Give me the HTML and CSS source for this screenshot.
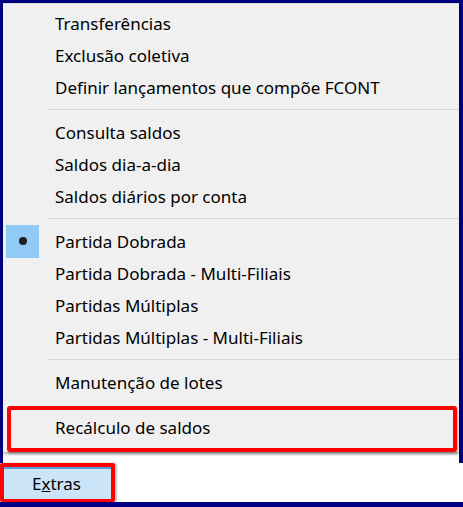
FILE: index.html
```html
<!DOCTYPE html>
<html lang="en">
<head>
    <meta charset="UTF-8">
    <meta name="viewport" content="width=device-width, initial-scale=1.0">
    <title>Menu Extras</title>
    <link rel="stylesheet" href="styles.css">
</head>
<body>
    <div class="screen">
        <div class="edge-top"></div>
        <div class="main">
            <div class="edge-left"></div>
            <div class="menu-area">
                <div class="menu">
                    <div class="item"><span class="gutter"></span><span class="label">Transferências</span></div>
                    <div class="item"><span class="gutter"></span><span class="label">Exclusão coletiva</span></div>
                    <div class="item"><span class="gutter"></span><span class="label">Definir lançamentos que compõe FCONT</span></div>
                    <div class="sep"></div>
                    <div class="item"><span class="gutter"></span><span class="label">Consulta saldos</span></div>
                    <div class="item"><span class="gutter"></span><span class="label">Saldos dia-a-dia</span></div>
                    <div class="item"><span class="gutter"></span><span class="label">Saldos diários por conta</span></div>
                    <div class="sep"></div>
                    <div class="item"><span class="gutter"><span class="check"><span class="dot"></span></span></span><span class="label">Partida Dobrada</span></div>
                    <div class="item"><span class="gutter"></span><span class="label">Partida Dobrada - Multi-Filiais</span></div>
                    <div class="item"><span class="gutter"></span><span class="label">Partidas Múltiplas</span></div>
                    <div class="item"><span class="gutter"></span><span class="label">Partidas Múltiplas - Multi-Filiais</span></div>
                    <div class="sep"></div>
                    <div class="item"><span class="gutter"></span><span class="label">Manutenção de lotes</span></div>
                    <div class="highlight">
                        <div class="item"><span class="label">Recálculo de saldos</span></div>
                    </div>
                </div>
            </div>
            <div class="edge-right"></div>
        </div>
        <div class="bottom">
            <div class="extras">
                <div class="extras-btn">E<u>x</u>tras</div>
            </div>
        </div>
        <div class="edge-bottom"></div>
    </div>
</body>
</html>
```

FILE: styles.css
```css
body {
    margin: 0;
    padding: 0;
    font-family: 'Noto Sans', 'Liberation Sans', sans-serif;
    font-size: 17px;
    color: #000;
}

.screen {
    width: 463px;
    height: 507px;
    background-color: #fff;
    display: flex;
    flex-direction: column;
    overflow: hidden;
}

.edge-top {
    height: 3px;
    background-color: #000082;
}

.main {
    display: flex;
    height: 460px;
}

.edge-left {
    width: 3px;
    background-color: #000082;
}

.edge-right {
    width: 4px;
    background-color: #000082;
}

.menu-area {
    flex: 1;
    background-color: #fff;
}

.menu {
    background-color: #f0f0f0;
    border-top: 1px solid #dcdcdc;
    padding-top: 3px;
    box-shadow: 0 2px 3px rgba(0, 0, 0, 0.35);
}

.item {
    display: flex;
    align-items: center;
    height: 32px;
}

.gutter {
    width: 45px;
    height: 32px;
    display: flex;
    align-items: center;
}

.label {
    padding-left: 7px;
    white-space: nowrap;
}

.check {
    margin-left: 3px;
    width: 33px;
    height: 33px;
    background-color: #91c9f7;
    display: flex;
    justify-content: center;
    align-items: center;
}

.dot {
    width: 8px;
    height: 8px;
    border-radius: 50%;
    background-color: #1f1f1f;
}

.sep {
    height: 13px;
    margin-left: 45px;
    display: flex;
    align-items: center;
}

.sep::before {
    content: "";
    display: block;
    width: 100%;
    height: 1px;
    background-color: #d7d7d7;
}

.highlight {
    margin: 8px 2px 0 4px;
    border: 4px solid #ff0000;
    border-radius: 3px;
    padding: 1px 0 5px;
    box-shadow: 1px 2px 2px rgba(0, 0, 0, 0.25);
}

.highlight .label {
    padding-left: 44px;
}

.bottom {
    height: 39px;
    display: flex;
}

.extras {
    width: 107px;
    border: 4px solid #ff0000;
    border-bottom-width: 3px;
    border-radius: 2px;
    box-shadow: 2px 0 2px rgba(0, 0, 0, 0.25);
}

.extras-btn {
    height: 100%;
    box-sizing: border-box;
    background-color: #cce4f7;
    border-top: 2px solid #5b9bd5;
    padding-left: 28px;
    line-height: 30px;
}

.edge-bottom {
    height: 5px;
    background-color: #000082;
}
```
